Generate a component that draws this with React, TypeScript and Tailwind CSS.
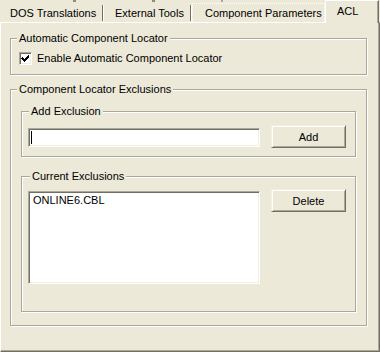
import React from 'react';

const etched = 'border border-[#ACA899] shadow-[inset_1px_1px_0_#fff,1px_1px_0_#fff]';
const sunken =
  'border border-t-[#ACA899] border-l-[#ACA899] border-r-white border-b-white shadow-[inset_1px_1px_0_#716F64,inset_-1px_-1px_0_#F1EFE2]';
const raised =
  'border border-t-[#F1EFE2] border-l-[#F1EFE2] border-r-[#716F64] border-b-[#716F64] shadow-[inset_1px_1px_0_#fff,inset_-1px_-1px_0_#ACA899]';

function GroupBox({ title, className, titleLeft, children }: { title: string; className: string; titleLeft: string; children?: React.ReactNode }) {
  return (
    <div className={`relative ${etched} ${className}`}>
      <span className={`absolute top-[-8px] ${titleLeft} bg-[#ECE9D8] px-[2px] leading-[14px]`}>{title}</span>
      {children}
    </div>
  );
}

function Button({ label }: { label: string }) {
  return (
    <button className={`w-[75px] h-[23px] bg-[#ECE9D8] ${raised} text-[11px] leading-[14px] text-black`}>
      {label}
    </button>
  );
}

export default function App() {
  const tabs = [
    { label: 'DOS Translations', w: 'w-[104px]', pl: 'pl-[10px]' },
    { label: 'External Tools', w: 'w-[88px]', pl: 'pl-[11px]' },
    { label: 'Component Parameters', w: 'w-[133px]', pl: 'pl-[12px]', hover: true },
  ];

  return (
    <div className="w-[380px] h-[352px] bg-[#ECE9D8] text-black text-[11px] font-['Liberation_Sans',Arial,sans-serif] overflow-hidden">
      {/* tab strip */}
      <div className="relative h-[22px] flex items-end">
        <div className="absolute top-0 left-0 w-[325px] h-[2px] flex">
          <div className="w-[73px]" />
          <div className="w-[3px] bg-[#8F8C7E]" />
          <div className="w-[76px]" />
          <div className="w-[3px] bg-[#8F8C7E]" />
          <div className="w-[66px]" />
          <div className="w-[2px] bg-[#ACA899]" />
        </div>
        {tabs.map((t) => (
          <div
            key={t.label}
            className={`${t.w} h-[19px] ${t.pl} flex items-center relative ${
              t.hover ? 'border border-b-0 border-dotted border-white' : ''
            }`}
          >
            <span className="leading-[14px]">{t.label}</span>
            {!t.hover && (
              <div className="absolute right-0 top-[2px] h-[16px] w-[2px] border-l border-[#716F64] bg-white" />
            )}
          </div>
        ))}
        <div className="relative z-10 -mb-px w-[54px] h-[23px] bg-[#ECE9D8] border-l border-t border-white border-r border-r-[#716F64] shadow-[inset_-1px_0_0_#ACA899] flex items-start pt-[3px] pl-[11px]">
          <span className="leading-[14px]">ACL</span>
        </div>
      </div>

      {/* panel */}
      <div className="w-[380px] h-[330px] border-l border-t border-white border-r border-r-[#716F64] border-b border-b-[#716F64] shadow-[inset_-1px_-1px_0_#ACA899] pl-[9px] pt-[15px]">
        <GroupBox title="Automatic Component Locator" className="w-[357px] h-[37px]" titleLeft="left-[6px]">
          <label className="flex items-center pl-[8px] pt-[12px] gap-[5px]">
            <span className={`w-[13px] h-[13px] bg-white ${sunken} flex items-center justify-center`}>
              <svg width="9" height="9" viewBox="0 0 9 9" shapeRendering="crispEdges">
                <path d="M1 3h1v1h1v1h1v-1h1v-1h1v-1h1v-1h1v3h-1v1h-1v1h-1v1h-1v1h-1v-1h-1v-1h-1v-1h-1z" fill="#000" />
              </svg>
            </span>
            <span className="leading-[14px]">Enable Automatic Component Locator</span>
          </label>
        </GroupBox>

        <GroupBox title="Component Locator Exclusions" className="w-[357px] h-[237px] mt-[14px] px-[10px] pt-[21px]" titleLeft="left-[6px]">
          <GroupBox title="Add Exclusion" className="w-[335px] h-[46px] flex items-start pl-[6px] pt-[13px]" titleLeft="left-[7px]">
            <div className={`w-[232px] h-[19px] mt-[3px] bg-white ${sunken} relative`}>
              <div className="absolute left-[2px] top-[2px] w-px h-[13px] bg-black" />
            </div>
            <div className="ml-[11px]">
              <Button label="Add" />
            </div>
          </GroupBox>

          <GroupBox title="Current Exclusions" className="w-[335px] h-[136px] mt-[19px] flex items-start pl-[6px] pt-[12px]" titleLeft="left-[8px]">
            <div className={`w-[232px] h-[93px] mt-[2px] bg-white ${sunken} pl-[4px] pt-[2px]`}>
              <div className="leading-[13px]">ONLINE6.CBL</div>
            </div>
            <div className="ml-[11px]">
              <Button label="Delete" />
            </div>
          </GroupBox>
        </GroupBox>
      </div>
    </div>
  );
}
